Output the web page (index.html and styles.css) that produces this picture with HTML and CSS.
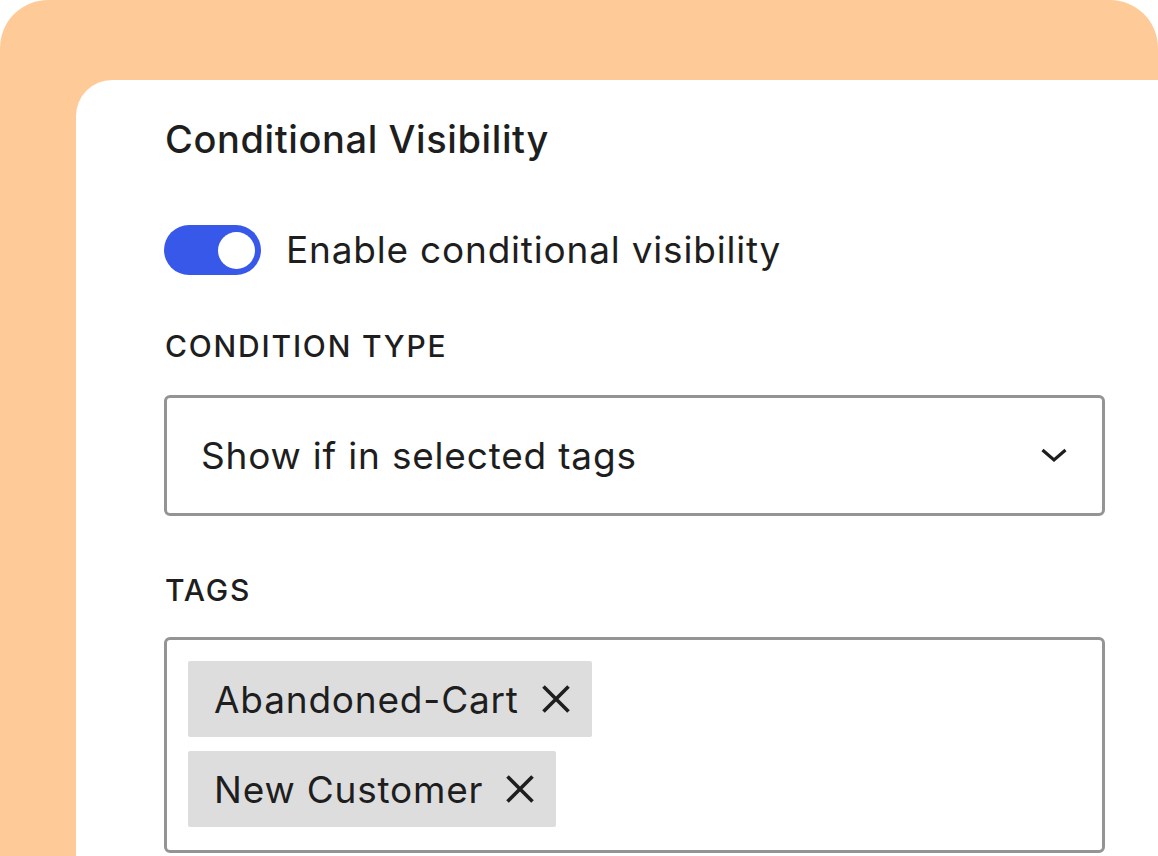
FILE: index.html
```html
<!DOCTYPE html>
<html>
<head>
<meta charset="utf-8">
<link rel="stylesheet" href="styles.css">
</head>
<body>
<div class="frame">
  <div class="panel">
    <h2 class="title">Conditional Visibility</h2>
    <div class="toggle-row">
      <span class="toggle"><span class="knob"></span></span>
      <span class="toggle-label">Enable conditional visibility</span>
    </div>
    <div class="field-label label-type">CONDITION TYPE</div>
    <div class="select">
      <span class="select-text">Show if in selected tags</span>
      <svg class="chevron" width="26" height="15" viewBox="0 0 26 15"><path d="M1.5 2 L13 12 L24.5 2" fill="none" stroke="#1e1e1e" stroke-width="3.2"/></svg>
    </div>
    <div class="field-label label-tags">TAGS</div>
    <div class="tags-box">
      <span class="chip">Abandoned-Cart<svg class="x" width="30" height="30" viewBox="0 0 30 30"><path d="M2.5 2.5 L27.5 27.5 M27.5 2.5 L2.5 27.5" stroke="#1e1e1e" stroke-width="3.6"/></svg></span>
      <span class="chip">New Customer<svg class="x" width="30" height="30" viewBox="0 0 30 30"><path d="M2.5 2.5 L27.5 27.5 M27.5 2.5 L2.5 27.5" stroke="#1e1e1e" stroke-width="3.6"/></svg></span>
    </div>
  </div>
</div>
</body>
</html>
```

FILE: styles.css
```css
html, body {
  margin: 0;
  padding: 0;
  background: #ffffff;
}
body {
  width: 1158px;
  height: 856px;
  overflow: hidden;
  font-family: Inter, "Noto Sans", sans-serif;
  color: #1e1e1e;
}
.frame {
  width: 1158px;
  height: 856px;
  box-sizing: border-box;
  background: #fecb98;
  border-radius: 48px 48px 0 0;
  padding: 80px 0 0 76px;
  display: flex;
}
.panel {
  flex: 1;
  background: #ffffff;
  border-radius: 36px 0 0 0;
  padding: 0 53px 0 88px;
  display: flex;
  flex-direction: column;
  align-items: flex-start;
}
.title {
  margin: 35px 0 0 1px;
  font-size: 38px;
  line-height: 48px;
  font-weight: 500;
  letter-spacing: 0.6px;
}
.toggle-row {
  margin-top: 62px;
  display: flex;
  align-items: center;
  gap: 25px;
}
.toggle {
  width: 97px;
  height: 50px;
  border-radius: 25px;
  background: #3858e9;
  display: flex;
  align-items: center;
  justify-content: flex-end;
  padding-right: 6px;
  box-sizing: border-box;
}
.knob {
  width: 37px;
  height: 37px;
  border-radius: 50%;
  background: #ffffff;
}
.toggle-label {
  font-size: 37px;
  line-height: 50px;
  letter-spacing: 0.8px;
}
.field-label {
  font-size: 30px;
  line-height: 40px;
  font-weight: 500;
  margin-left: 1px;
  letter-spacing: 1.8px;
}
.label-type {
  margin-top: 51px;
}
.select {
  margin-top: 29px;
  align-self: stretch;
  height: 121px;
  box-sizing: border-box;
  border: 3px solid #949494;
  border-radius: 6px;
  display: flex;
  align-items: center;
  justify-content: space-between;
  padding: 0 35px 0 34px;
}
.select-text {
  font-size: 37px;
  letter-spacing: 0.8px;
}
.label-tags {
  margin-top: 54px;
}
.tags-box {
  margin-top: 27px;
  align-self: stretch;
  height: 216px;
  box-sizing: border-box;
  border: 3px solid #949494;
  border-radius: 6px;
  padding: 21px 21px;
  display: flex;
  flex-direction: column;
  align-items: flex-start;
  gap: 14px;
}
.chip {
  height: 76px;
  background: #dddddd;
  border-radius: 2px;
  display: flex;
  align-items: center;
  gap: 22px;
  padding: 0 21px 0 26px;
  font-size: 37px;
  letter-spacing: 0.8px;
}
.x {
  display: block;
}
```
